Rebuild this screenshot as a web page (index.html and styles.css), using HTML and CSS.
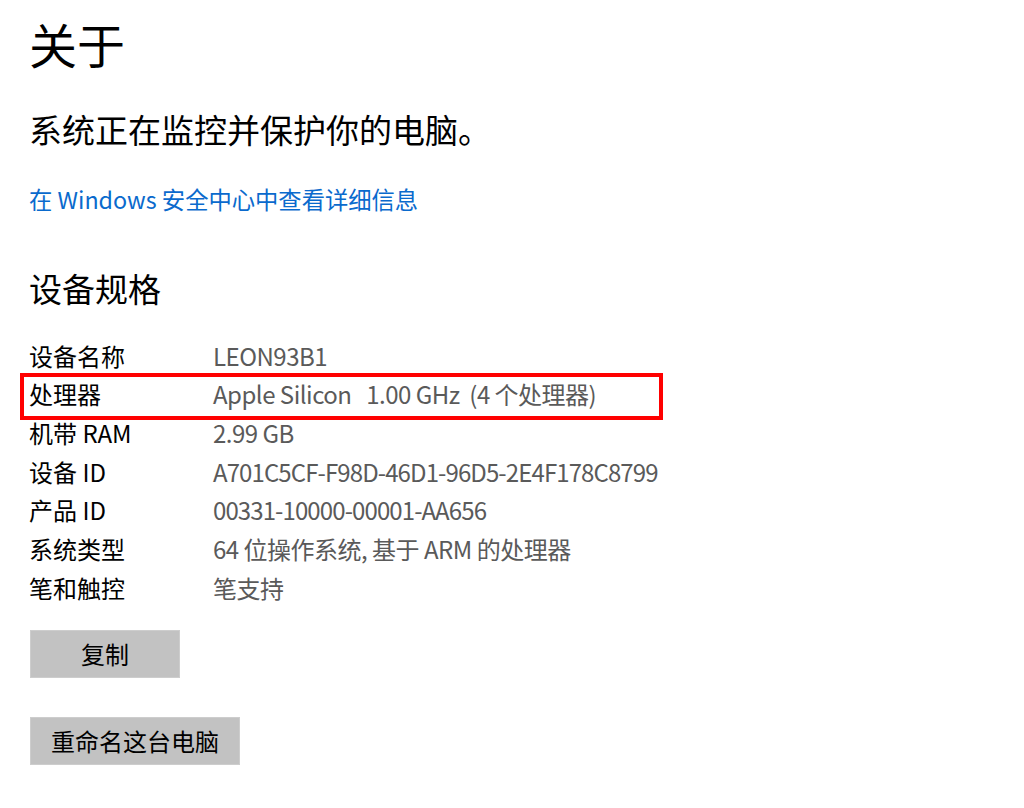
FILE: index.html
```html
<!DOCTYPE html>
<html lang="zh-CN">
<head>
    <meta charset="UTF-8">
    <title>关于</title>
    <link rel="stylesheet" href="styles.css">
</head>
<body>
    <div class="page">
        <h1 class="titulo">关于</h1>

        <p class="estado">系统正在监控并保护你的电脑。</p>
        <a class="enlace" href="#">在 Windows 安全中心中查看详细信息</a>

        <h2 class="seccion">设备规格</h2>

        <div class="specs">
            <div class="fila">
                <span class="clave">设备名称</span>
                <span class="valor">LEON93B1</span>
            </div>
            <div class="fila marcada">
                <span class="clave">处理器</span>
                <span class="valor">Apple Silicon   1.00 GHz  (4 个处理器)</span>
            </div>
            <div class="fila">
                <span class="clave">机带 RAM</span>
                <span class="valor">2.99 GB</span>
            </div>
            <div class="fila">
                <span class="clave">设备 ID</span>
                <span class="valor valor-id">A701C5CF-F98D-46D1-96D5-2E4F178C8799</span>
            </div>
            <div class="fila">
                <span class="clave">产品 ID</span>
                <span class="valor valor-id">00331-10000-00001-AA656</span>
            </div>
            <div class="fila">
                <span class="clave">系统类型</span>
                <span class="valor">64 位操作系统, 基于 ARM 的处理器</span>
            </div>
            <div class="fila">
                <span class="clave">笔和触控</span>
                <span class="valor">笔支持</span>
            </div>
        </div>

        <button type="button" class="btn btn-copiar">复制</button>
        <button type="button" class="btn btn-renombrar">重命名这台电脑</button>
    </div>
</body>
</html>
```

FILE: styles.css
```css
body {
    margin: 0;
    background-color: #fff;
    font-family: "Noto Sans CJK SC", "Noto Sans", sans-serif;
    color: #000;
}
.page {
    padding: 0 30px 0 29px;
}
.titulo {
    margin: 15px 0 0;
    font-size: 48px;
    font-weight: normal;
    line-height: 56px;
}
.estado {
    margin: 36px 0 0;
    font-size: 33px;
    line-height: 44px;
}
.enlace {
    display: block;
    margin-top: 32px;
    font-size: 23.3px;
    line-height: 32px;
    color: #0a6acd;
    text-decoration: none;
}
.seccion {
    margin: 51px 0 0;
    font-size: 33px;
    font-weight: normal;
    line-height: 44px;
}
.specs {
    margin-top: 26px;
}
.fila {
    display: flex;
    height: 38.67px;
    align-items: center;
    font-size: 24px;
    position: relative;
}
.clave {
    width: 184px;
    color: #000;
}
.valor {
    color: #5a5a5a;
    white-space: pre;
    letter-spacing: -0.5px;
}
.valor-id {
    letter-spacing: -0.9px;
}
/* recuadro rojo de la captura original */
.marcada::after {
    content: "";
    position: absolute;
    top: -2px;
    bottom: -7px;
    left: -9px;
    width: 643px;
    border: 4px solid #f00;
    box-sizing: border-box;
}
.btn {
    display: block;
    height: 48px;
    background-color: #c2c2c2;
    border: 1px solid #cdcdcd;
    font-family: inherit;
    font-size: 24px;
    color: #000;
    padding: 0;
}
.btn-copiar {
    width: 150px;
    margin-top: 23px;
    margin-left: 1px;
}
.btn-renombrar {
    width: 210px;
    margin-top: 39px;
    margin-left: 1px;
}
```
